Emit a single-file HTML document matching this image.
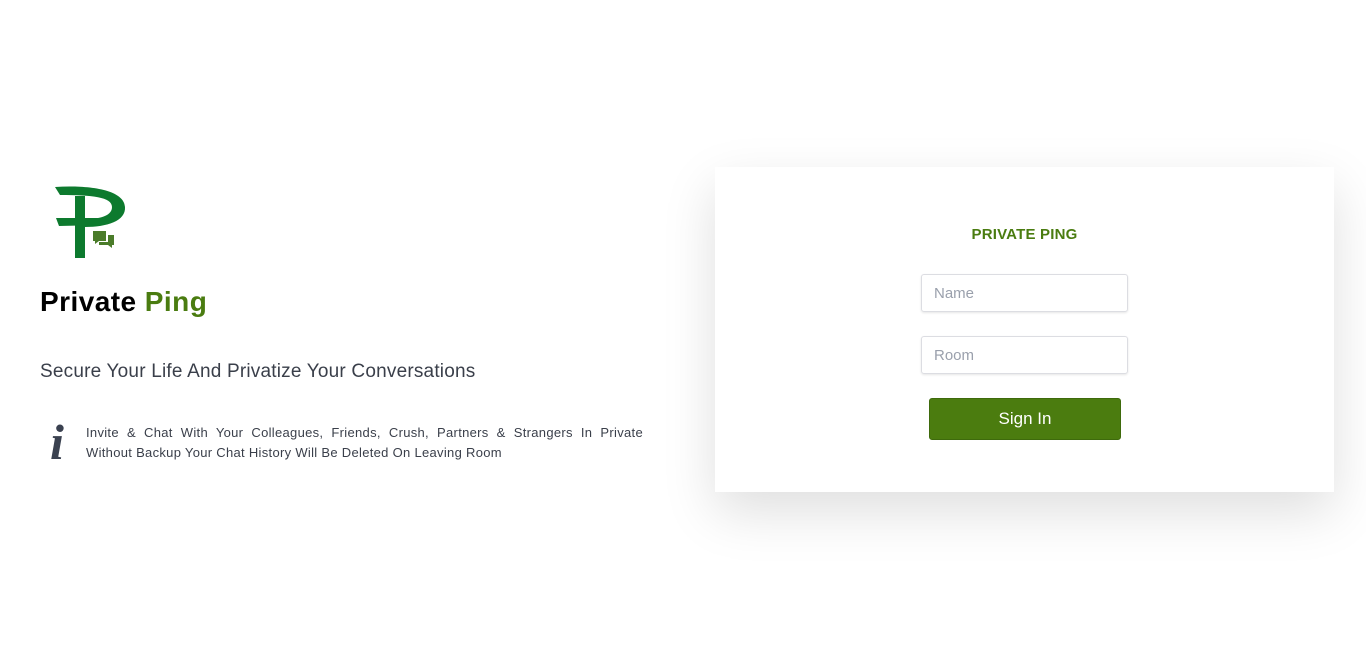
<!DOCTYPE html>
<html><head><style>
body{margin:0;width:1366px;height:657px;background:#fff;font-family:"Liberation Sans",sans-serif;position:relative;overflow:hidden}
.abs{position:absolute}
.title{left:40px;top:286px;font-size:28px;font-weight:bold;color:#000;letter-spacing:0.45px}
.title span{color:#4a7c10}
.sub{left:40px;top:361px;font-size:19px;color:#3a3f4a;letter-spacing:0.2px}
.info{left:86px;top:423px;width:557px;font-size:13px;line-height:20px;color:#3a3f4a;letter-spacing:0.3px}
.l1{text-align:justify;text-align-last:justify;white-space:nowrap}
.card{left:715px;top:167px;width:619px;height:325px;background:#fff;box-shadow:0 20px 50px rgba(0,0,0,.13)}
.ct{width:619px;top:226px;text-align:center;font-weight:bold;color:#4a7c10;font-size:15px;letter-spacing:0.2px}
.inp{left:921px;height:38px;border:1px solid #dcdde2;border-radius:3px;box-shadow:0 1px 2px rgba(0,0,0,.1);color:#9aa0ac;font-size:15px;line-height:38px;padding-left:12px;box-sizing:border-box;width:207px}
.btn{left:929px;top:398px;width:192px;height:42px;background:#4b7c0f;border:1px solid #3e6a0c;border-radius:3px;box-sizing:border-box;color:#fff;font-size:17px;text-align:center;line-height:40px}
</style></head><body>
<svg class="abs" style="left:52px;top:185px" width="80" height="76" viewBox="0 0 80 76">
<path d="M3 2 C35 0 72 4 73 22 C74 36 55 42 33 42 L33 34 C50 34 60 30 60 22 C60 12 40 10 8 10 Z" fill="#0d7a2e"/>
<path d="M23 11 L33 11 L33 73 L23 73 Z" fill="#0d7a2e"/>
<path d="M4 33 L50 33 L50 40 L7 41 Z" fill="#0d7a2e"/>
<path d="M41 46 L54 46 L54 56 L47 56 L43 59 L43 56 L41 56 Z" fill="#4b7c2a"/>
<path d="M47 57 L56 57 L56 50 L62 50 L62 60 L60 60 L60 63 L56 60 L47 60 Z" fill="#4b7c2a"/>
</svg>
<div class="abs title">Private <span>Ping</span></div>
<div class="abs sub">Secure Your Life And Privatize Your Conversations</div>
<div class="abs" style="left:50px;top:413px;font-family:'Liberation Serif',serif;font-style:italic;font-weight:bold;font-size:50px;color:#3a4150">i</div>
<div class="abs info"><div class="l1">Invite &amp; Chat With Your Colleagues, Friends, Crush, Partners &amp; Strangers In Private</div><div>Without Backup Your Chat History Will Be Deleted On Leaving Room</div></div>
<div class="abs card"></div>
<div class="abs ct" style="left:715px">PRIVATE PING</div>
<div class="abs inp" style="top:274px">Name</div>
<div class="abs inp" style="top:336px">Room</div>
<div class="abs btn">Sign In</div>
</body></html>
